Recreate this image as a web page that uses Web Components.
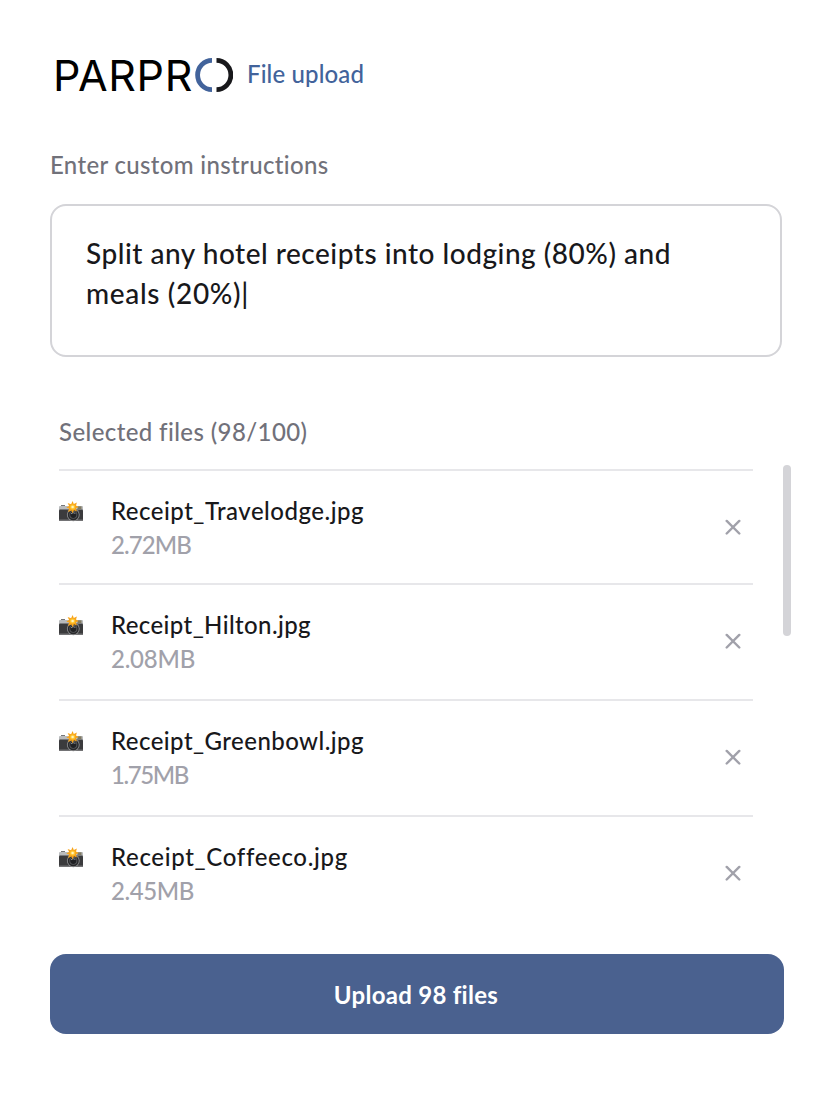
<!DOCTYPE html>
<html lang="en">
<head>
<meta charset="utf-8">
<title>File upload</title>
<style>
body {
  margin: 0;
  background: #fff;
  font-family: Lato, "Liberation Sans", sans-serif;
  font-weight: 500;
  font-size: 24px;
  line-height: 34px;
  color: #18181b;
}
</style>
</head>
<body>
<upload-page></upload-page>

<script>
// One line of text, tracked so that it fills the given width
class TextLine extends HTMLElement {
  constructor() {
    super();
    this.attachShadow({ mode: 'open' });
    this.shadowRoot.innerHTML = `
<style>
:host { display: block; white-space: nowrap; }
span { display: inline-block; }
</style>
<span><slot></slot></span>
`;
  }

  connectedCallback() {
    const width = Number(this.getAttribute('width'));
    const span = this.shadowRoot.querySelector('span');
    const count = this.textContent.length;
    if (!width || !count) {
      return;
    }
    const natural = span.getBoundingClientRect().width;
    span.style.letterSpacing = `${(width - natural) / count}px`;
  }
}

class ParproLogo extends HTMLElement {
  constructor() {
    super();
    this.attachShadow({ mode: 'open' });
    this.shadowRoot.innerHTML = `
<style>
:host { display: flex; align-items: center; height: 40px; color: #000; }
text-line {
  width: 142px;
  font-family: Inter, sans-serif;
  font-size: 43px;
  font-weight: 400;
  font-optical-sizing: none;
  line-height: 40px;
}
svg { display: block; }
</style>
<text-line width="140">PARPR</text-line>
<svg width="38" height="36" viewBox="0 0 38 36" fill="none" stroke-width="4.8">
<path d="M17 3.4A14.4 14.6 0 0 0 17 32.6" stroke="#42639b"/>
<path d="M21.5 3.4A14.4 14.6 0 0 1 21.5 32.6" stroke="#18181b"/>
</svg>
`;
  }
}

class CameraIcon extends HTMLElement {
  constructor() {
    super();
    this.attachShadow({ mode: 'open' });
    this.shadowRoot.innerHTML = `
<style>
:host { display: block; width: 24px; height: 21px; }
svg { display: block; }
</style>
<svg width="24" height="21" viewBox="0 0 24 21">
<path d="M2 4h4v2H2z" fill="#777"/>
<rect y="5" width="24" height="4.5" rx="1" fill="#b9bbbd"/>
<rect y="8.6" width="24" height="11.4" rx="1" fill="#3b3b3d"/>
<rect y="18.6" width="24" height="1.4" rx=".6" fill="#737375"/>
<rect x="18.5" y="5.3" width="4" height="2.7" fill="#817b63"/>
<circle cx="14.3" cy="13.8" r="6.4" fill="#8c8d8f"/>
<circle cx="14.3" cy="13.8" r="5.5" fill="#29292b"/>
<circle cx="14.3" cy="13.8" r="4" fill="#56585b"/>
<circle cx="14.3" cy="13.8" r="3.1" fill="#202124"/>
<path d="M12 12.8q2-2 4.4-.4" stroke="#8b9095" fill="none"/>
<path d="M13.6 0l1.2 3 3.1-1.6-.9 3.2 2.6 1.5-2.7 1.2 1 3.1-3-1.2-1.2 3-1.4-2.8-3.2 1.5 1-3.4-2.8-1 2.8-1.4-1.5-3 3.5 1.1z" fill="#f8a51b"/>
<circle cx="13.6" cy="6" r="2.5" fill="#ffc832"/>
<circle cx="13.6" cy="6" r="1.3" fill="#fff3c0"/>
</svg>
`;
  }
}

class InstructionsBox extends HTMLElement {
  constructor() {
    super();
    this.attachShadow({ mode: 'open' });
    this.shadowRoot.innerHTML = `
<style>
:host {
  display: block;
  box-sizing: border-box;
  width: 732px;
  height: 153px;
  padding: 27px 34px;
  border: 2px solid #d4d4d8;
  border-radius: 16px;
  font-size: 28px;
  line-height: 40px;
}
</style>
<slot></slot>
`;
  }
}

class FileRow extends HTMLElement {
  constructor() {
    super();
    this.attachShadow({ mode: 'open' });
  }

  connectedCallback() {
    this.shadowRoot.innerHTML = `
<style>
:host {
  display: flex;
  box-sizing: border-box;
  height: 116px;
  padding-top: 23px;
  border-top: 2px solid #e7e7ea;
}
camera-icon { margin-top: 7px; }
.info { flex: 1; margin-left: 28px; }
.size { color: #a1a1aa; }
.close { display: block; margin: 25px 12px 0 0; }
</style>
<camera-icon></camera-icon>
<div class="info">
<text-line width="${this.getAttribute('name-width')}">${this.getAttribute('name')}</text-line>
<text-line class="size" width="${this.getAttribute('size-width')}">${this.getAttribute('size')}</text-line>
</div>
<svg class="close" width="16" height="16" viewBox="0 0 16 16" stroke="#a1a1aa" stroke-width="2.4" stroke-linecap="round">
<path d="M1.7 1.9l12.6 12.6M14.3 1.9L1.7 14.5"/>
</svg>
`;
  }
}

class UploadButton extends HTMLElement {
  constructor() {
    super();
    this.attachShadow({ mode: 'open' });
    this.shadowRoot.innerHTML = `
<style>
button {
  display: flex;
  align-items: center;
  justify-content: center;
  box-sizing: border-box;
  width: 734px;
  height: 80px;
  padding: 2px 2px 0 0;
  border: 0;
  border-radius: 16px;
  background: #4a618f;
  color: #fff;
  font: inherit;
  font-weight: 700;
}
</style>
<button><slot></slot></button>
`;
  }
}

class UploadPage extends HTMLElement {
  constructor() {
    super();
    this.attachShadow({ mode: 'open' });
    this.shadowRoot.innerHTML = `
<style>
:host { display: block; box-sizing: border-box; height: 1107px; padding: 55px 0 0 50px; overflow: hidden; }
header { display: flex; align-items: center; padding-left: 3px; }
header > text-line { margin: -2px 0 0 14px; color: #42639b; }
.label { color: #71717a; }
.instructions { margin-top: 53px; }
instructions-box { margin-top: 22px; }
.selected { margin: 58px 0 0 9px; }
.files { display: flex; justify-content: space-between; width: 741px; margin-top: 16px; }
.rows { width: 694px; margin: 4px 0 0 9px; }
file-row:first-child { height: 114px; }
.thumb { width: 8px; height: 171px; border-radius: 4px; background: #d4d4d8; }
upload-button { display: block; margin-top: 23px; }
</style>
<header>
<parpro-logo></parpro-logo>
<text-line width="117">File upload</text-line>
</header>
<text-line class="label instructions" width="279">Enter custom instructions</text-line>
<instructions-box>
<text-line width="585">Split any hotel receipts into lodging (80%) and</text-line>
<text-line width="163">meals (20%)|</text-line>
</instructions-box>
<text-line class="label selected" width="248">Selected files (98/100)</text-line>
<div class="files">
<div class="rows">
<file-row name="Receipt_Travelodge.jpg" name-width="253" size="2.72MB" size-width="80"></file-row>
<file-row name="Receipt_Hilton.jpg" name-width="200" size="2.08MB" size-width="84"></file-row>
<file-row name="Receipt_Greenbowl.jpg" name-width="253" size="1.75MB" size-width="77"></file-row>
<file-row name="Receipt_Coffeeco.jpg" name-width="236" size="2.45MB" size-width="83"></file-row>
</div>
<div class="thumb"></div>
</div>
<upload-button><text-line width="164">Upload 98 files</text-line></upload-button>
`;
  }
}

customElements.define('text-line', TextLine);
customElements.define('parpro-logo', ParproLogo);
customElements.define('camera-icon', CameraIcon);
customElements.define('instructions-box', InstructionsBox);
customElements.define('file-row', FileRow);
customElements.define('upload-button', UploadButton);
customElements.define('upload-page', UploadPage);
</script>
</body>
</html>
